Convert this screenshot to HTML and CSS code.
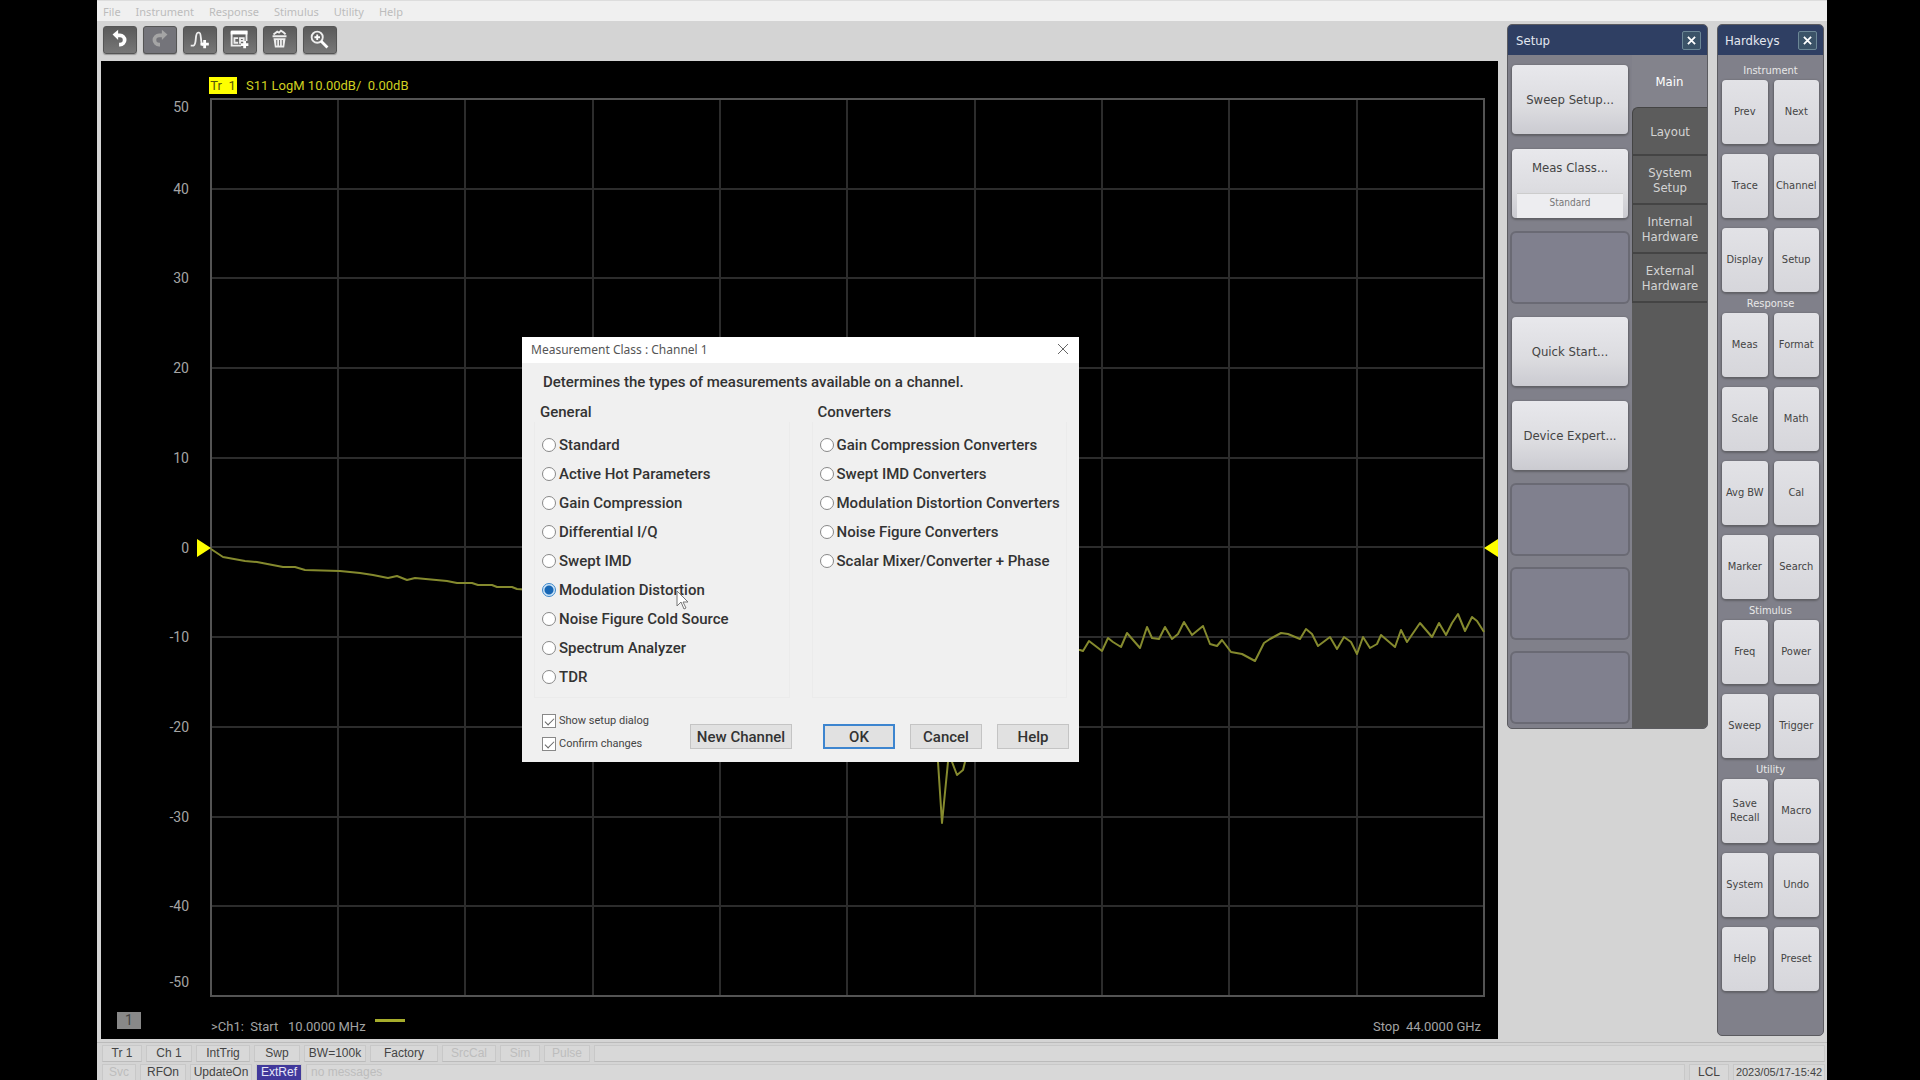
FILE: index.html
```html
<!DOCTYPE html>
<html lang="en">
<head>
  <meta charset="UTF-8" />
  <meta name="viewport" content="width=device-width, initial-scale=1.0" />
  <title>Network Analyzer</title>
  <link rel="stylesheet" href="styles.css">
</head>
<body>
  <div class="app">
    <nav class="menu">
      <button>File</button>
      <button>Instrument</button>
      <button>Response</button>
      <button>Stimulus</button>
      <button>Utility</button>
      <button>Help</button>
    </nav>

    <div class="main">
      <div class="workspace">
        <!-- Toolbar -->
        <div class="toolbar">
          <button class="tool" aria-label="Undo">
            <svg viewBox="0 0 34 28"><path d="M13 9h4a5 5 0 0 1 0 10h-1" fill="none" stroke="#fff" stroke-width="4"/><path d="M9 8l6-5v11z" fill="#fff"/></svg>
          </button>
          <button class="tool off" aria-label="Redo">
            <svg viewBox="0 0 34 28"><path d="M20 9h-4a5 5 0 0 0 0 10h1" fill="none" stroke="#a5a5a5" stroke-width="4"/><path d="M25 8l-6-5v11z" fill="#a5a5a5"/></svg>
          </button>
          <button class="tool" aria-label="Add trace">
            <svg viewBox="0 0 34 28"><path d="M7 20h3c4-1 1-14 5-14h1c3 0 1 11 4 14" fill="none" stroke="#eee" stroke-width="2"/><path d="M22 14v9M17.500 18.500h9" stroke="#fff" stroke-width="3"/></svg>
          </button>
          <button class="tool" aria-label="Add channel">
            <svg viewBox="0 0 34 28"><path d="M8 5h16v10M8 5v15h10" fill="none" stroke="#eee" stroke-width="2"/><path d="M7 6h18" stroke="#fff" stroke-width="4"/><path d="M15 12h-4v5h4M17 18v-6h4v3h-4" fill="none" stroke="#eee" stroke-width="2"/><path d="M22 15v8M18 19h8" stroke="#fff" stroke-width="3"/></svg>
          </button>
          <button class="tool" aria-label="Delete">
            <svg viewBox="0 0 34 28"><path d="M9 9h15v2H9zM10 12h13l-1.500 10h-10z" fill="#eee"/><path d="M10 8l4-3 2 1 2-2 3 2 2 2" fill="none" stroke="#eee" stroke-width="2"/><path d="M13.500 14v6M16.500 14v6M19.500 14v6" stroke="#666"/></svg>
          </button>
          <button class="tool" aria-label="Zoom">
            <svg viewBox="0 0 34 28"><circle cx="14" cy="11" r="6" fill="none" stroke="#eee" stroke-width="2"/><path d="M14 8v6M11 11h6" stroke="#fff" stroke-width="2"/><path d="M18 15l7 7" stroke="#fff" stroke-width="3"/></svg>
          </button>
        </div>

        <!-- Trace window -->
        <div class="window">
          <div class="trace-title"><span class="trace-tag">Tr&nbsp; 1</span>S11 LogM 10.00dB/&nbsp; 0.00dB</div>
          <div class="axis">
            <span>50</span><span>40</span><span>30</span><span>20</span><span>10</span><span>0</span><span>-10</span><span>-20</span><span>-30</span><span>-40</span><span>-50</span>
          </div>
          <div class="plot">
            <svg class="graph" viewBox="211 99 1273 897" preserveAspectRatio="none">
              <path class="gridline" d="M338 99v897M465 99v897M593 99v897M720 99v897M847 99v897M975 99v897M1102 99v897M1229 99v897M1357 99v897"/>
              <path class="gridline" d="M211 189h1273M211 278h1273M211 368h1273M211 458h1273M211 547h1273M211 637h1273M211 727h1273M211 817h1273M211 906h1273"/>
              <path class="frame" d="M211 99h1273v897h-1273z"/>
              <polyline class="trace" points="211,549 223,557 245,561 257,562 283,567 295,567 305,570 340,571 360,573 373,575 388,578 397,576 407,580 415,578 447,581 457,583 472,583 478,585 492,585 497,587 512,587 517,589 560,592 700,605 850,625 920,660 938,762 942,823 948,762 950,740 952,762 957,775 963,770 965,762 980,700 1030,650 1080,650 1083,651 1089,641 1102,651 1108,638 1113,642 1121,647 1127,633 1140,648 1147,627 1152,638 1159,639 1165,627 1172,639 1178,634 1184,622 1192,635 1203,626 1210,644 1217,646 1222,640 1231,652 1242,654 1255,661 1264,643 1270,639 1281,633 1288,634 1300,639 1306,629 1312,634 1318,646 1330,637 1337,649 1344,637 1351,642 1357,654 1363,637 1370,648 1377,644 1381,635 1395,647 1401,630 1407,642 1420,623 1432,637 1439,623 1446,635 1452,623 1458,614 1465,631 1472,617 1477,621 1484,632"/>
            </svg>
            <span class="ref ref-left"></span>
            <span class="ref ref-right"></span>
          </div>
          <div class="channel-no"><span>1</span></div>
          <div class="sweep">
            <span class="start">&gt;Ch1:&nbsp; Start&nbsp;&nbsp; 10.0000 MHz</span>
            <span class="swatch"></span>
            <span class="stop">Stop&nbsp; 44.0000 GHz</span>
          </div>
        </div>
      </div>

      <!-- Softkeys -->
      <aside class="panel setup">
        <header class="panel-head">Setup <button class="close" aria-label="Close Setup"><svg viewBox="0 0 10 10"><path d="M1 1l8 8M9 1l-8 8"/></svg></button></header>
        <div class="setup-body">
          <div class="softkeys">
            <button class="key">Sweep Setup...</button>
            <button class="key with-value">Meas Class...<small>Standard</small></button>
            <div class="slot"></div>
            <button class="key">Quick Start...</button>
            <button class="key">Device Expert...</button>
            <div class="slot"></div>
            <div class="slot"></div>
            <div class="slot"></div>
          </div>
          <div class="tabs">
            <button class="tab active">Main</button>
            <button class="tab">Layout</button>
            <button class="tab">System Setup</button>
            <button class="tab">Internal Hardware</button>
            <button class="tab">External Hardware</button>
          </div>
        </div>
      </aside>

      <!-- Hardkeys -->
      <aside class="panel hardkeys">
        <header class="panel-head">Hardkeys <button class="close" aria-label="Close Hardkeys"><svg viewBox="0 0 10 10"><path d="M1 1l8 8M9 1l-8 8"/></svg></button></header>
        <h2>Instrument</h2>
        <div class="keys">
          <button class="key">Prev</button><button class="key">Next</button>
          <button class="key">Trace</button><button class="key">Channel</button>
          <button class="key">Display</button><button class="key">Setup</button>
        </div>
        <h2>Response</h2>
        <div class="keys">
          <button class="key">Meas</button><button class="key">Format</button>
          <button class="key">Scale</button><button class="key">Math</button>
          <button class="key">Avg BW</button><button class="key">Cal</button>
          <button class="key">Marker</button><button class="key">Search</button>
        </div>
        <h2>Stimulus</h2>
        <div class="keys">
          <button class="key">Freq</button><button class="key">Power</button>
          <button class="key">Sweep</button><button class="key">Trigger</button>
        </div>
        <h2>Utility</h2>
        <div class="keys">
          <button class="key">Save<br>Recall</button><button class="key">Macro</button>
          <button class="key">System</button><button class="key">Undo</button>
          <button class="key">Help</button><button class="key">Preset</button>
        </div>
      </aside>
    </div>

    <!-- Status bar -->
    <footer class="status">
      <div class="status-row">
        <span class="cell w40">Tr 1</span>
        <span class="cell w46">Ch 1</span>
        <span class="cell w54">IntTrig</span>
        <span class="cell w46">Swp</span>
        <span class="cell w62">BW=100k</span>
        <span class="cell w68">Factory</span>
        <span class="cell w54 dim">SrcCal</span>
        <span class="cell w40 dim">Sim</span>
        <span class="cell w46 dim">Pulse</span>
        <span class="cell fill"></span>
      </div>
      <div class="status-row">
        <span class="cell w34 dim">Svc</span>
        <span class="cell w46">RFOn</span>
        <span class="cell w62">UpdateOn</span>
        <span class="cell w46 on">ExtRef</span>
        <span class="cell fill dim">no messages</span>
        <span class="cell w40">LCL</span>
        <span class="cell date">2023/05/17-15:42</span>
      </div>
    </footer>

    <!-- Measurement class dialog -->
    <form class="dialog" role="dialog" aria-label="Measurement Class">
      <header class="dialog-head">Measurement Class : Channel 1
        <button type="button" class="dialog-close" aria-label="Close"><svg viewBox="0 0 10 10"><path d="M0 0l10 10M10 0L0 10"/></svg></button>
      </header>
      <p class="intro">Determines the types of measurements available on a channel.</p>
      <div class="groups">
        <div class="group" role="radiogroup" aria-labelledby="general">
          <h3 id="general">General</h3>
          <div class="options">
            <label><input type="radio" name="class">Standard</label>
            <label><input type="radio" name="class">Active Hot Parameters</label>
            <label><input type="radio" name="class">Gain Compression</label>
            <label><input type="radio" name="class">Differential I/Q</label>
            <label><input type="radio" name="class">Swept IMD</label>
            <label><input type="radio" name="class" checked>Modulation Distortion</label>
            <label><input type="radio" name="class">Noise Figure Cold Source</label>
            <label><input type="radio" name="class">Spectrum Analyzer</label>
            <label><input type="radio" name="class">TDR</label>
          </div>
        </div>
        <div class="group" role="radiogroup" aria-labelledby="converters">
          <h3 id="converters">Converters</h3>
          <div class="options">
            <label><input type="radio" name="class">Gain Compression Converters</label>
            <label><input type="radio" name="class">Swept IMD Converters</label>
            <label><input type="radio" name="class">Modulation Distortion Converters</label>
            <label><input type="radio" name="class">Noise Figure Converters</label>
            <label><input type="radio" name="class">Scalar Mixer/Converter + Phase</label>
          </div>
        </div>
      </div>
      <div class="dialog-foot">
        <div class="checks">
          <label><input type="checkbox" checked>Show setup dialog</label>
          <label><input type="checkbox" checked>Confirm changes</label>
        </div>
        <button type="button" class="btn wide">New Channel</button>
        <button type="button" class="btn default">OK</button>
        <button type="button" class="btn">Cancel</button>
        <button type="button" class="btn">Help</button>
      </div>
      <svg class="cursor" viewBox="0 0 13 20"><path d="M1 1v15l4-4 3 7 2-1-3-6h5z" fill="#fff" stroke="#777"/></svg>
    </form>
  </div>
</body>
</html>
```
FILE: styles.css
```css
* {
  box-sizing: border-box;
}

body {
  margin: 0;
  padding: 0 93px 0 97px;
  background: #000;
  font-family: "Liberation Sans", Arial, sans-serif;
  overflow: hidden;
}

button {
  font-family: inherit;
  padding: 0;
  border: none;
  cursor: pointer;
}

.app {
  position: relative;
  display: flex;
  flex-direction: column;
  height: 100vh;
  background: #d4d4d4;
}

/* Menu */
.menu {
  display: flex;
  gap: 15px;
  height: 21px;
  padding-left: 6px;
  background: #f0f0f0;
  border-top: 1px solid #ddd;
}

.menu button {
  background: none;
  color: #bcbcbc;
  font-family: "Noto Sans", sans-serif;
  font-size: 11px;
}

.main {
  flex: 1;
  display: flex;
  gap: 9px;
  min-height: 0;
  padding-right: 3px;
}

.workspace {
  flex: 1;
  display: flex;
  flex-direction: column;
  padding: 0 0 3px 4px;
}

/* Toolbar */
.toolbar {
  display: flex;
  gap: 6px;
  height: 40px;
  padding: 5px 2px 7px;
}

.tool {
  width: 34px;
  height: 28px;
  border: 1px solid #555;
  border-radius: 3px;
  background: linear-gradient(#5a5a5a, #777);
  box-shadow: 0 1px 1px #999;
}

.tool.off {
  background: #74747a;
}

.tool svg {
  display: block;
  width: 100%;
  height: 100%;
}

/* Trace window */
.window {
  flex: 1;
  display: grid;
  grid-template-columns: 110px 1fr 14px;
  grid-template-rows: 38px 1fr 43px;
  background: #000;
  color: #a4a4a4;
  font-family: Roboto, sans-serif;
  font-size: 14px;
}

.trace-title {
  grid-column: 2 / 4;
  padding-top: 16px;
  color: #d0d020;
  font-size: 13px;
  line-height: 17px;
}

.trace-tag {
  display: inline-block;
  width: 28px;
  margin: 0 9px 0 -2px;
  background: #ffff00;
  color: #55550a;
  text-align: center;
}

.axis {
  display: flex;
  flex-direction: column;
  grid-column: 1;
  padding-right: 22px;
  line-height: 16px;
}

.axis span {
  flex: 2 1 0;
  display: flex;
  align-items: center;
  justify-content: flex-end;
}

.axis span:first-child {
  flex: 1 1 0;
  align-items: flex-start;
}

.axis span:last-child {
  flex: 1 1 0;
  align-items: flex-end;
  line-height: 28px;
}

.plot {
  position: relative;
}

.graph {
  position: absolute;
  inset: 0;
  width: 100%;
  height: 100%;
  overflow: visible;
}

.gridline {
  fill: none;
  stroke: #2c2c2c;
  stroke-width: 2;
}

.frame {
  fill: none;
  stroke: #545454;
  stroke-width: 2;
}

.trace {
  fill: none;
  stroke: #858a2e;
  stroke-width: 2;
  stroke-linejoin: round;
}

.ref {
  position: absolute;
  top: 50%;
  margin-top: -9px;
  border: 9px solid transparent;
}

.ref-left {
  right: 100%;
  border-left: 14px solid #ffff00;
  border-right: none;
}

.ref-right {
  left: 100%;
  border-right: 14px solid #ffff00;
  border-left: none;
}

.channel-no {
  grid-column: 1;
  padding: 16px 0 0 16px;
}

.channel-no span {
  display: block;
  width: 24px;
  background: #888;
  color: #444;
  line-height: 17px;
  text-align: center;
}

.sweep {
  display: flex;
  align-items: center;
  gap: 9px;
  height: 100%;
  padding: 18px 3px 0 0;
  font-size: 13px;
}

.swatch {
  width: 30px;
  height: 3px;
  margin-bottom: 12px;
  background: #a6ad2c;
}

.stop {
  margin-left: auto;
}

/* Side panels */
.panel {
  margin-top: 3px;
  border: 1px solid #5b5b60;
  border-radius: 5px;
  background: #80808a;
  font-family: "DejaVu Sans Condensed", "DejaVu Sans", sans-serif;
  overflow: hidden;
}

.panel-head {
  display: flex;
  align-items: center;
  justify-content: space-between;
  height: 30px;
  padding: 0 6px 0 8px;
  background: #2f3f63;
  color: #e4e8f0;
  font-size: 13px;
}

.close {
  width: 19px;
  height: 19px;
  border: 1px solid #6c8796;
  border-radius: 2px;
  background: #3b5368;
}

.close svg {
  display: block;
  width: 9px;
  margin: 0 auto;
  stroke: #fff;
  stroke-width: 2;
}

.key {
  border-radius: 4px;
  background: linear-gradient(#e8e8ec, #dcdce0 60%, #cbcbd1);
  box-shadow: 0 1px 2px 1px #606066;
  color: #444;
}

.setup {
  align-self: flex-start;
  width: 201px;
}

.setup-body {
  display: flex;
}

.softkeys {
  display: flex;
  flex-direction: column;
  flex: 1;
  gap: 15px;
  padding: 10px 4px 6px;
}

.softkeys .key {
  height: 69px;
  font-size: 13px;
}

.with-value {
  display: flex;
  flex-direction: column;
  align-items: center;
  justify-content: space-between;
  padding: 11px 5px 0;
}

.with-value small {
  width: 100%;
  height: 25px;
  background: #ededf0;
  border-top: 1px solid #ccc;
  color: #777;
  font-size: 10px;
  line-height: 17px;
}

.slot {
  height: 69px;
  border-radius: 4px;
  background: #80808e;
  box-shadow: 0 0 0 2px #6a6a74;
}

.tabs {
  display: flex;
  flex-direction: column;
  width: 75px;
  background: linear-gradient(#83838c 60px, #5a5a5a 60px);
}

.tab {
  height: 49px;
  padding: 0 8px;
  border-left: 1px solid #444;
  border-bottom: 2px solid #444;
  background: #5c5c5c;
  color: #d4d4d4;
  font-size: 13px;
  line-height: 15px;
}

.tab.active {
  height: 52px;
  border: none;
  background: #83838c;
  color: #fff;
}

.tab.active + .tab {
  border-top: 1px solid #444;
  border-top-left-radius: 6px;
}

.hardkeys {
  width: 107px;
  margin-bottom: 6px;
}

.hardkeys .panel-head {
  padding-left: 7px;
}

.hardkeys .key {
  background: linear-gradient(#e2e2e6, #d6d6db);
}

.hardkeys h2 {
  margin: 0;
  padding-top: 2px;
  color: #e8e8e8;
  font-size: 11px;
  font-weight: normal;
  line-height: 19px;
  text-align: center;
}

.hardkeys .panel-head + h2 {
  padding-top: 6px;
}

.keys {
  display: grid;
  grid-template-columns: 1fr 1fr;
  gap: 10px 6px;
  padding: 0 4px;
}

.keys .key {
  height: 64px;
  font-size: 11px;
  line-height: 14px;
}

/* Status bar */
.status {
  height: 38px;
  padding: 2px 2px 0 5px;
  border-top: 1px solid #bbb;
  color: #444;
  font-size: 12px;
}

.status-row {
  display: flex;
  gap: 4px;
  height: 19px;
}

.cell {
  height: 17px;
  border: 1px solid #c8c8c8;
  border-bottom-color: #bbb;
  background: #d8d8d8;
  line-height: 15px;
  text-align: center;
  white-space: nowrap;
}

.w34 { width: 34px; }
.w40 { width: 40px; }
.w46 { width: 46px; }
.w54 { width: 54px; }
.w62 { width: 62px; }
.w68 { width: 68px; }

.fill {
  flex: 1;
  padding-left: 4px;
  text-align: left;
}

.date {
  width: 92px;
  font-size: 11px;
}

.dim {
  color: #bdbdbd;
}

.on {
  background: #41399b;
  color: #e6e6f8;
}

/* Dialog */
.dialog {
  position: absolute;
  top: 337px;
  left: 425px;
  width: 557px;
  background: #f0f0f0;
  color: #333;
  font-family: Roboto, sans-serif;
  font-size: 15px;
  font-weight: 500;
}

.dialog-head {
  display: flex;
  align-items: center;
  justify-content: space-between;
  height: 26px;
  padding: 0 11px 2px 9px;
  background: #fff;
  color: #555;
  font-family: "Noto Sans", sans-serif;
  font-size: 12px;
  font-weight: normal;
}

.dialog-close {
  width: 10px;
  background: none;
}

.dialog-close svg {
  display: block;
  width: 10px;
  overflow: visible;
  stroke: #666;
}

.intro {
  margin: 9px 0 0 21px;
  line-height: 21px;
}

.groups {
  display: flex;
  gap: 22px;
  padding: 9px 12px 0;
}

.group {
  flex: 1 1 0;
  min-width: 0;
}

.group h3 {
  margin: 0;
  padding-left: 6px;
  font-size: 15px;
  font-weight: 500;
  line-height: 20px;
}

.options {
  height: 276px;
  padding: 8px 7px 0;
  border: 1px solid #ebebeb;
  border-top: none;
}

.dialog label {
  display: flex;
  align-items: center;
  gap: 3px;
  white-space: nowrap;
}

.options label {
  height: 29px;
}

.dialog input {
  appearance: none;
  flex: none;
  width: 14px;
  height: 14px;
  margin: 0;
  border: 1px solid #888;
  background: #fff;
}

.dialog input[type="radio"] {
  border-radius: 50%;
}

.dialog input[type="radio"]:checked {
  border-color: #3b87cc;
  background: radial-gradient(#1766b4 4px, #cde4f7 5px);
}

.checks input {
  position: relative;
}

.checks input::after {
  content: "";
  position: absolute;
  top: 1px;
  left: 4px;
  width: 4px;
  height: 8px;
  border: solid #666;
  border-width: 0 1px 1px 0;
  transform: rotate(45deg);
}

.dialog-foot {
  display: flex;
  align-items: flex-end;
  gap: 15px;
  padding: 11px 10px 7px 20px;
}

.checks {
  flex: 1;
  color: #444;
  font-size: 11px;
  font-weight: normal;
}

.checks label {
  height: 23px;
}

.btn {
  width: 72px;
  height: 25px;
  margin-bottom: 6px;
  border: 1px solid #c4c4c4;
  background: #e1e1e1;
  color: #333;
  font-size: 15px;
  font-weight: 500;
}

.btn.wide {
  width: 102px;
  margin-right: 16px;
}

.btn.default {
  border: 2px solid #3d85cf;
}

.cursor {
  position: absolute;
  top: 253px;
  left: 154px;
  width: 13px;
  height: 20px;
}
```
